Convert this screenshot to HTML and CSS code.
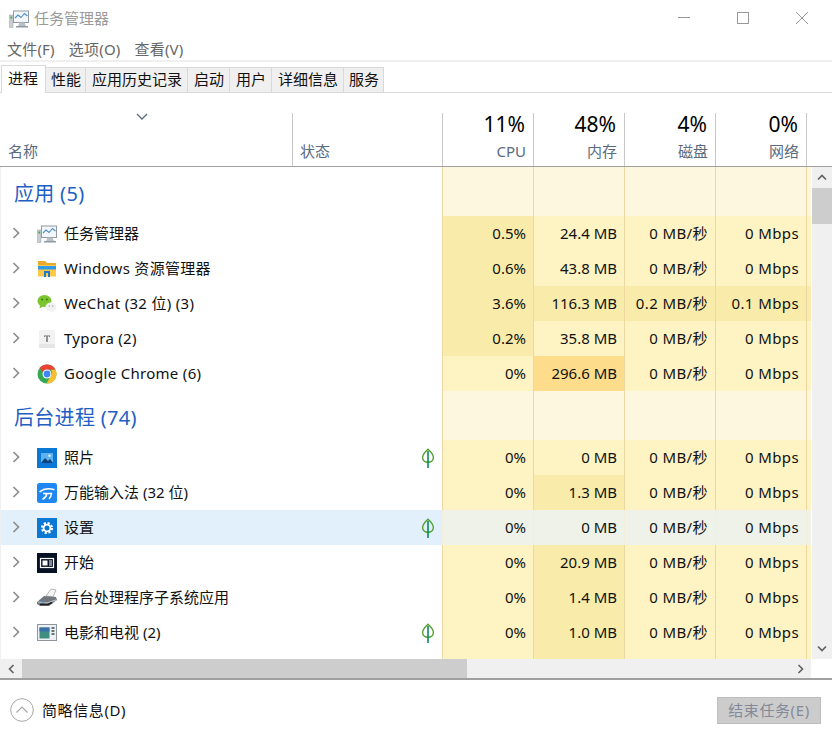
FILE: index.html
```html
<!DOCTYPE html>
<html lang="zh-CN">
<head>
<meta charset="utf-8">
<title>任务管理器</title>
<link rel="stylesheet" href="styles.css">
</head>
<body>
<svg class="defs" width="0" height="0" aria-hidden="true">
  <defs>
    <symbol id="chev" viewBox="0 0 8 12"><path d="M1.500 1l5 5-5 5" fill="none" stroke="#8e8e8e" stroke-width="1.700"/></symbol>
    <symbol id="leaf" viewBox="0 0 14 20"><path d="M7 1.200C3.800 4 1.600 6.400 1.600 9.300c0 3 2.400 5 5.400 5s5.400-2 5.400-5C12.400 6.400 10.200 4 7 1.200z" fill="none" stroke="#4f9f2a" stroke-width="1.400"/><path d="M7 3v17" stroke="#078a5e" stroke-width="1.600"/></symbol>
    <symbol id="taskmgr" viewBox="0 0 20 20"><rect x="4.500" y="2" width="15" height="11.500" fill="#f4f7fa" stroke="#8f9aa3"/><path d="M6 9l3-3 3 2.500 3.500-4 3 2.500" fill="none" stroke="#4d8fc7" stroke-width="1.100"/><path d="M9 17h8l-1.500-3.500h-5z" fill="#b9c0c6"/><rect x="7" y="17" width="12" height="1.500" fill="#8f9aa3"/><rect x="0.500" y="6" width="3.500" height="12.500" fill="#c9ced2" stroke="#9aa1a6" stroke-width=".5"/><rect x="1.300" y="7.500" width="1.800" height="2" fill="#39b54a"/></symbol>
  </defs>
</svg>
<div class="window">
  <header class="titlebar">
    <svg class="title-icon" width="20" height="20"><use href="#taskmgr"/></svg>
    <span class="title-text">任务管理器</span>
    <div class="controls">
      <svg width="14" height="14" viewBox="0 0 14 14"><path d="M1 6.500h12" stroke="#999" fill="none"/></svg>
      <svg width="14" height="14" viewBox="0 0 14 14"><rect x="1.500" y="1.500" width="11" height="11" stroke="#999" fill="none"/></svg>
      <svg width="14" height="14" viewBox="0 0 14 14"><path d="M1 1l12 12M13 1L1 13" stroke="#999" fill="none"/></svg>
    </div>
  </header>
  <nav class="menubar"><span>文件(F)</span><span>选项(O)</span><span>查看(V)</span></nav>
  <div class="tabs">
    <span class="tab active">进程</span><span class="tab narrow">性能</span><span class="tab">应用历史记录</span><span class="tab">启动</span><span class="tab">用户</span><span class="tab">详细信息</span><span class="tab narrow">服务</span>
  </div>
  <div class="head">
    <div class="hcol hname">
      <svg class="sort" width="12" height="8" viewBox="0 0 12 8"><path d="M1 1l5 5 5-5" fill="none" stroke="#5a6b80" stroke-width="1.300"/></svg>
      <span class="hlabel">名称</span>
    </div>
    <div class="hcol hstatus"><span class="hlabel">状态</span></div>
    <div class="hcol hnum"><span class="pct">11%</span><span class="hlabel">CPU</span></div>
    <div class="hcol hnum"><span class="pct">48%</span><span class="hlabel">内存</span></div>
    <div class="hcol hnum"><span class="pct">4%</span><span class="hlabel">磁盘</span></div>
    <div class="hcol hnum"><span class="pct">0%</span><span class="hlabel">网络</span></div>
  </div>
  <div class="body">
    <div class="table">
      <div class="row group"><div class="gname">应用 (5)</div><div class="c h0"></div><div class="c h0"></div><div class="c h0"></div><div class="c h0"></div><div class="end h0"></div></div>

      <div class="row">
        <div class="name"><svg class="chev" width="8" height="12"><use href="#chev"/></svg><svg class="ico" width="20" height="20"><use href="#taskmgr"/></svg><span>任务管理器</span></div>
        <div class="status"></div>
        <div class="c h2">0.5%</div><div class="c h1">24.4 MB</div><div class="c h1">0 MB/秒</div><div class="c h1">0 Mbps</div><div class="end h1"></div>
      </div>
      <div class="row">
        <div class="name"><svg class="chev" width="8" height="12"><use href="#chev"/></svg>
          <svg class="ico" width="20" height="20" viewBox="0 0 20 20"><path d="M1 2h7l2 2h9v3H1z" fill="#e8a92c"/><path d="M1 6h18v11.500H1z" fill="#fcc94a"/><path d="M1 7h18v3.500H1z" fill="#2f9be6"/><path d="M7 18v-6h6v6h-2v-4H9v4z" fill="#1f78c8"/></svg>
          <span class="wide">Windows 资源管理器</span></div>
        <div class="status"></div>
        <div class="c h2">0.6%</div><div class="c h1">43.8 MB</div><div class="c h1">0 MB/秒</div><div class="c h1">0 Mbps</div><div class="end h1"></div>
      </div>
      <div class="row">
        <div class="name"><svg class="chev" width="8" height="12"><use href="#chev"/></svg>
          <svg class="ico" width="20" height="20" viewBox="0 0 20 20"><ellipse cx="7.500" cy="7" rx="7" ry="6" fill="#7bc52e"/><path d="M3 11l-.5 3.500 3.500-2z" fill="#7bc52e"/><circle cx="5.200" cy="5.500" r="1" fill="#3d7a12"/><circle cx="9.800" cy="5.500" r="1" fill="#3d7a12"/><ellipse cx="14" cy="13" rx="5.500" ry="4.500" fill="#f1f1f1"/><path d="M16.500 16.500l1.500 2-3.500-1.500z" fill="#f1f1f1"/><circle cx="12.300" cy="12" r=".8" fill="#aaa"/><circle cx="15.700" cy="12" r=".8" fill="#aaa"/></svg>
          <span class="wide">WeChat (32 位) (3)</span></div>
        <div class="status"></div>
        <div class="c h2">3.6%</div><div class="c h2">116.3 MB</div><div class="c h2">0.2 MB/秒</div><div class="c h2">0.1 Mbps</div><div class="end h2"></div>
      </div>
      <div class="row">
        <div class="name"><svg class="chev" width="8" height="12"><use href="#chev"/></svg>
          <svg class="ico" width="20" height="20" viewBox="0 0 20 20"><rect x="2" y="1" width="16" height="18" rx="1" fill="#f2f2f2"/><rect x="2" y="15" width="16" height="4" fill="#e6e6e6"/><path d="M7 6.500h6v1.500h-.8V7.300h-1.500V13H9.300V7.300H7.800V8H7z" fill="#6a6a6a"/></svg>
          <span class="wide">Typora (2)</span></div>
        <div class="status"></div>
        <div class="c h2">0.2%</div><div class="c h1">35.8 MB</div><div class="c h1">0 MB/秒</div><div class="c h1">0 Mbps</div><div class="end h1"></div>
      </div>
      <div class="row">
        <div class="name"><svg class="chev" width="8" height="12"><use href="#chev"/></svg>
          <svg class="ico" width="20" height="20" viewBox="0 0 20 20"><circle cx="10" cy="10" r="9.500" fill="#34a853"/><path d="M10 .5a9.500 9.500 0 0 1 8.500 5.200H10a4.500 4.500 0 0 0-4.200 2.900L2.800 3.800A9.500 9.500 0 0 1 10 .5z" fill="#ea4335"/><path d="M18.500 5.700A9.500 9.500 0 0 1 9.500 19.500l4.300-7.400a4.400 4.400 0 0 0 0-6.400z" fill="#fbc02d"/><circle cx="10" cy="10" r="4.500" fill="#fff"/><circle cx="10" cy="10" r="3.400" fill="#4285f4"/></svg>
          <span class="wide">Google Chrome (6)</span></div>
        <div class="status"></div>
        <div class="c h1">0%</div><div class="c h3">296.6 MB</div><div class="c h1">0 MB/秒</div><div class="c h1">0 Mbps</div><div class="end h1"></div>
      </div>

      <div class="row group"><div class="gname">后台进程 (74)</div><div class="c h0"></div><div class="c h0"></div><div class="c h0"></div><div class="c h0"></div><div class="end h0"></div></div>

      <div class="row">
        <div class="name"><svg class="chev" width="8" height="12"><use href="#chev"/></svg>
          <svg class="ico" width="20" height="20" viewBox="0 0 20 20"><rect width="20" height="20" fill="#0a78d4"/><rect x="4" y="5" width="12" height="10" fill="#5cb3ee"/><path d="M4 15l4-5 3 3 2-2 3 4z" fill="#0f3f7c"/><circle cx="12.500" cy="7.800" r="1.200" fill="#dff1fc"/></svg>
          <span>照片</span></div>
        <div class="status"><svg width="14" height="20"><use href="#leaf"/></svg></div>
        <div class="c h1">0%</div><div class="c h1">0 MB</div><div class="c h1">0 MB/秒</div><div class="c h1">0 Mbps</div><div class="end h1"></div>
      </div>
      <div class="row">
        <div class="name"><svg class="chev" width="8" height="12"><use href="#chev"/></svg>
          <svg class="ico" width="20" height="20" viewBox="0 0 20 20"><rect width="20" height="20" rx="2.500" fill="#1e88f0"/><path d="M2.500 9C6 6.200 12 5 17.500 6.800" fill="none" stroke="#fff" stroke-width="1.500"/><path d="M6 10.500h8.500c-.2 2.500-1 4-2.500 5.500M10 10.500C9.500 13 8 15 5.500 16.300" fill="none" stroke="#fff" stroke-width="1.500"/></svg>
          <span>万能输入法 (32 位)</span></div>
        <div class="status"></div>
        <div class="c h1">0%</div><div class="c h2">1.3 MB</div><div class="c h1">0 MB/秒</div><div class="c h1">0 Mbps</div><div class="end h1"></div>
      </div>
      <div class="row selected">
        <div class="name"><svg class="chev" width="8" height="12"><use href="#chev"/></svg>
          <svg class="ico" width="20" height="20" viewBox="0 0 20 20"><rect width="20" height="20" fill="#0a78d4"/><circle cx="10" cy="10" r="4.800" fill="none" stroke="#fff" stroke-width="2.500" stroke-dasharray="2.100 1.670"/><circle cx="10" cy="10" r="3.400" fill="none" stroke="#fff" stroke-width="1.800"/></svg>
          <span>设置</span></div>
        <div class="status"><svg width="14" height="20"><use href="#leaf"/></svg></div>
        <div class="c">0%</div><div class="c">0 MB</div><div class="c">0 MB/秒</div><div class="c">0 Mbps</div><div class="end"></div>
      </div>
      <div class="row">
        <div class="name"><svg class="chev" width="8" height="12"><use href="#chev"/></svg>
          <svg class="ico" width="20" height="20" viewBox="0 0 20 20"><rect width="20" height="20" fill="#061224"/><rect x="3.500" y="5.500" width="13" height="9" fill="none" stroke="#fff" stroke-width="1.200"/><rect x="5.500" y="7.500" width="5" height="5" fill="#fff"/><path d="M12 8h3M12 10h3M12 12h3" stroke="#fff"/></svg>
          <span>开始</span></div>
        <div class="status"></div>
        <div class="c h1">0%</div><div class="c h2">20.9 MB</div><div class="c h1">0 MB/秒</div><div class="c h1">0 Mbps</div><div class="end h1"></div>
      </div>
      <div class="row">
        <div class="name"><svg class="chev" width="8" height="12"><use href="#chev"/></svg>
          <svg class="ico" width="20" height="20" viewBox="0 0 20 20"><path d="M9 8l5-7 5 1-3 7z" fill="#f4f4f4" stroke="#8a8a8a" stroke-width=".6"/><path d="M0 14l7-6 12 1 1 3-8 6-9 0-3-2z" fill="#73777c"/><path d="M1 14l9 1 9-3" fill="none" stroke="#c4c7ca" stroke-width="1.200"/><path d="M3 16.500h8l4-2" fill="none" stroke="#1c2024" stroke-width="1.500"/><circle cx="6" cy="14" r="1" fill="#2f9be6"/></svg>
          <span>后台处理程序子系统应用</span></div>
        <div class="status"></div>
        <div class="c h1">0%</div><div class="c h2">1.4 MB</div><div class="c h1">0 MB/秒</div><div class="c h1">0 Mbps</div><div class="end h1"></div>
      </div>
      <div class="row">
        <div class="name"><svg class="chev" width="8" height="12"><use href="#chev"/></svg>
          <svg class="ico" width="20" height="20" viewBox="0 0 20 20"><rect x=".5" y="1.500" width="19" height="16" fill="#eef1f3" stroke="#8e969c"/><rect x="2.500" y="4.500" width="10" height="11" fill="#3e8f7f"/><rect x="2.500" y="4.500" width="10" height="4" fill="#3a6fa8"/><path d="M14.500 5h3M14.500 8h3M14.500 11h3" stroke="#3f4b55" stroke-width="1.500"/></svg>
          <span>电影和电视 (2)</span></div>
        <div class="status"><svg width="14" height="20"><use href="#leaf"/></svg></div>
        <div class="c h1">0%</div><div class="c h2">1.0 MB</div><div class="c h1">0 MB/秒</div><div class="c h1">0 Mbps</div><div class="end h1"></div>
      </div>
      <div class="row">
        <div class="name"></div><div class="status"></div>
        <div class="c h1"></div><div class="c h2"></div><div class="c h1"></div><div class="c h1"></div><div class="end h1"></div>
      </div>
    </div>
    <div class="vscroll">
      <div class="sbtn"><svg width="10" height="7" viewBox="0 0 10 7"><path d="M1 5.500l4-4 4 4" fill="none" stroke="#606060" stroke-width="1.600"/></svg></div>
      <div class="vthumb"></div>
      <div class="vtrack"></div>
      <div class="sbtn"><svg width="10" height="7" viewBox="0 0 10 7"><path d="M1 1.500l4 4 4-4" fill="none" stroke="#606060" stroke-width="1.600"/></svg></div>
    </div>
  </div>
  <div class="hscroll">
    <div class="hbtn"><svg width="7" height="10" viewBox="0 0 7 10"><path d="M5.500 1l-4 4 4 4" fill="none" stroke="#606060" stroke-width="1.600"/></svg></div>
    <div class="hthumb"></div>
    <div class="htrack"></div>
    <div class="hbtn"><svg width="7" height="10" viewBox="0 0 7 10"><path d="M1.500 1l4 4-4 4" fill="none" stroke="#606060" stroke-width="1.600"/></svg></div>
  </div>
  <footer class="footer">
    <div class="less">
      <svg width="24" height="24" viewBox="0 0 24 24"><circle cx="12" cy="12" r="11.300" fill="none" stroke="#a8a8a8"/><path d="M6.500 14.500L12 9l5.500 5.500" fill="none" stroke="#a8a8a8" stroke-width="1.200"/></svg>
      <span class="less-text">简略信息(D)</span>
    </div>
    <div class="endtask">结束任务(E)</div>
  </footer>
</div>
</body>
</html>
```
FILE: styles.css
```css
* { box-sizing: border-box; }
html, body { margin: 0; padding: 0; background: #fff; }
body {
  width: 832px;
  height: 740px;
  overflow: hidden;
  font-family: "Noto Sans", "Noto Sans CJK SC", sans-serif;
  font-size: 15px;
  color: #111;
}
.defs { position: absolute; }
.window { width: 832px; height: 740px; display: flex; flex-direction: column; }

.titlebar { height: 37px; display: flex; align-items: center; padding-left: 9px; }
.title-icon { margin-right: 5px; }
.title-text { color: #9a9a9a; line-height: 20px; margin-top: -2px; }
.controls { margin-left: auto; display: flex; gap: 45px; padding-right: 23px; margin-top: -1px; }

.menubar { height: 23px; display: flex; gap: 14px; padding-left: 7px; align-items: center; color: #666; line-height: 20px; letter-spacing: .2px; }
.tabs {
  height: 33px;
  border-top: 2px solid #f0f0f0;
  border-bottom: 1px solid #d9d9d9;
  display: flex;
  align-items: flex-end;
  padding-top: 3px;
  padding-left: 1px;
  background: #fff;
}
.tab {
  height: 25px;
  line-height: 23px;
  padding: 0 5px 0 6px;
  background: #f0f0f0;
  border: 1px solid #d9d9d9;
  border-left: 0;
  border-bottom: 0;
  white-space: nowrap;
}
.tab.narrow { padding: 0 4px 0 5px; }
.tab.active {
  height: 28px;
  background: #fff;
  border-left: 1px solid #d9d9d9;
  margin-bottom: -1px;
  padding: 0 6px;
  width: 45px;
  line-height: 25px;
  position: relative;
  z-index: 1;
}

.head {
  height: 74px;
  padding-top: 20px;
  border-bottom: 1px solid #a0a0a0;
  display: grid;
  grid-template-columns: 293px 150px repeat(4, 91px);
  align-items: stretch;
}
.hcol { border-right: 1px solid #c9c9c9; display: flex; flex-direction: column; justify-content: flex-end; position: relative; padding-bottom: 5px; }
.hname { padding-left: 8px; }
.hstatus { padding-left: 7px; }
.hnum { align-items: flex-end; padding-right: 7px; justify-content: space-between; }
.hlabel { color: #5a6b80; line-height: 20px; }
.pct { font-size: 21px; line-height: 22px; color: #000; margin-right: 1px; }
.sort { position: absolute; left: 136px; top: 0; }

.body { height: 492px; display: flex; }
.table { width: 811px; height: 492px; overflow: hidden; border-left: 1px solid #f0f0f0; }
.row {
  height: 35px;
  display: grid;
  grid-template-columns: 291px 150px repeat(4, 91px) 5px;
  align-items: stretch;
}
.group { height: 49px; }
.gname { grid-column: 1 / 3; color: #1f5fc4; font-size: 20px; padding: 13px 0 0 13px; line-height: 28px; letter-spacing: .3px; }
.name { display: flex; align-items: center; white-space: nowrap; padding-left: 11px; }
.name span { margin-top: -2px; }
.wide { letter-spacing: .3px; }
.chev { margin-right: 17px; margin-top: -2px; }
.ico { margin-right: 7px; flex: none; }
.status { display: flex; justify-content: flex-end; align-items: center; padding-right: 7px; }
.c {
  border-left: 1px solid #ecd8a0;
  text-align: right;
  padding-right: 7px;
  line-height: 34px;
  white-space: nowrap;
}
.c:nth-child(n+5) { letter-spacing: .4px; }
.end { border-left: 1px solid #ecd8a0; }
.h0 { background: #fef7e0; }
.h1 { background: #fef3c2; }
.h2 { background: #f9ecaa; }
.h3 { background: #fddc8c; }
.selected .name, .selected .status { background: #e1f0fb; }
.selected .c, .selected .end { background: #eef2e8; border-left-color: #f5eddc; }

.vscroll { width: 20px; margin-left: 1px; background: #f0f0f0; display: flex; flex-direction: column; }
.sbtn { height: 21px; display: flex; align-items: center; justify-content: center; }
.vthumb { height: 36px; background: #cdcdcd; }
.vtrack { flex: 1; }

.hscroll { height: 20px; display: flex; padding-right: 21px; }
.hbtn { width: 22px; height: 19px; background: #f0f0f0; display: flex; align-items: center; justify-content: center; }
.hthumb { width: 445px; height: 19px; background: #cdcdcd; }
.htrack { flex: 1; height: 19px; background: #f0f0f0; }

.footer { flex: 1; border-top: 2px solid #a0a0a0; display: flex; align-items: center; justify-content: space-between; padding: 0 11px 0 10px; margin-top: -1px; }
.less { display: flex; align-items: center; gap: 8px; }
.less-text { margin-top: -2px; letter-spacing: .6px; }
.endtask {
  width: 104px;
  height: 27px;
  background: #cccccc;
  border: 1px solid #bdbdbd;
  color: #84899a;
  text-align: center;
  line-height: 25px;
  letter-spacing: .6px;
}
```
